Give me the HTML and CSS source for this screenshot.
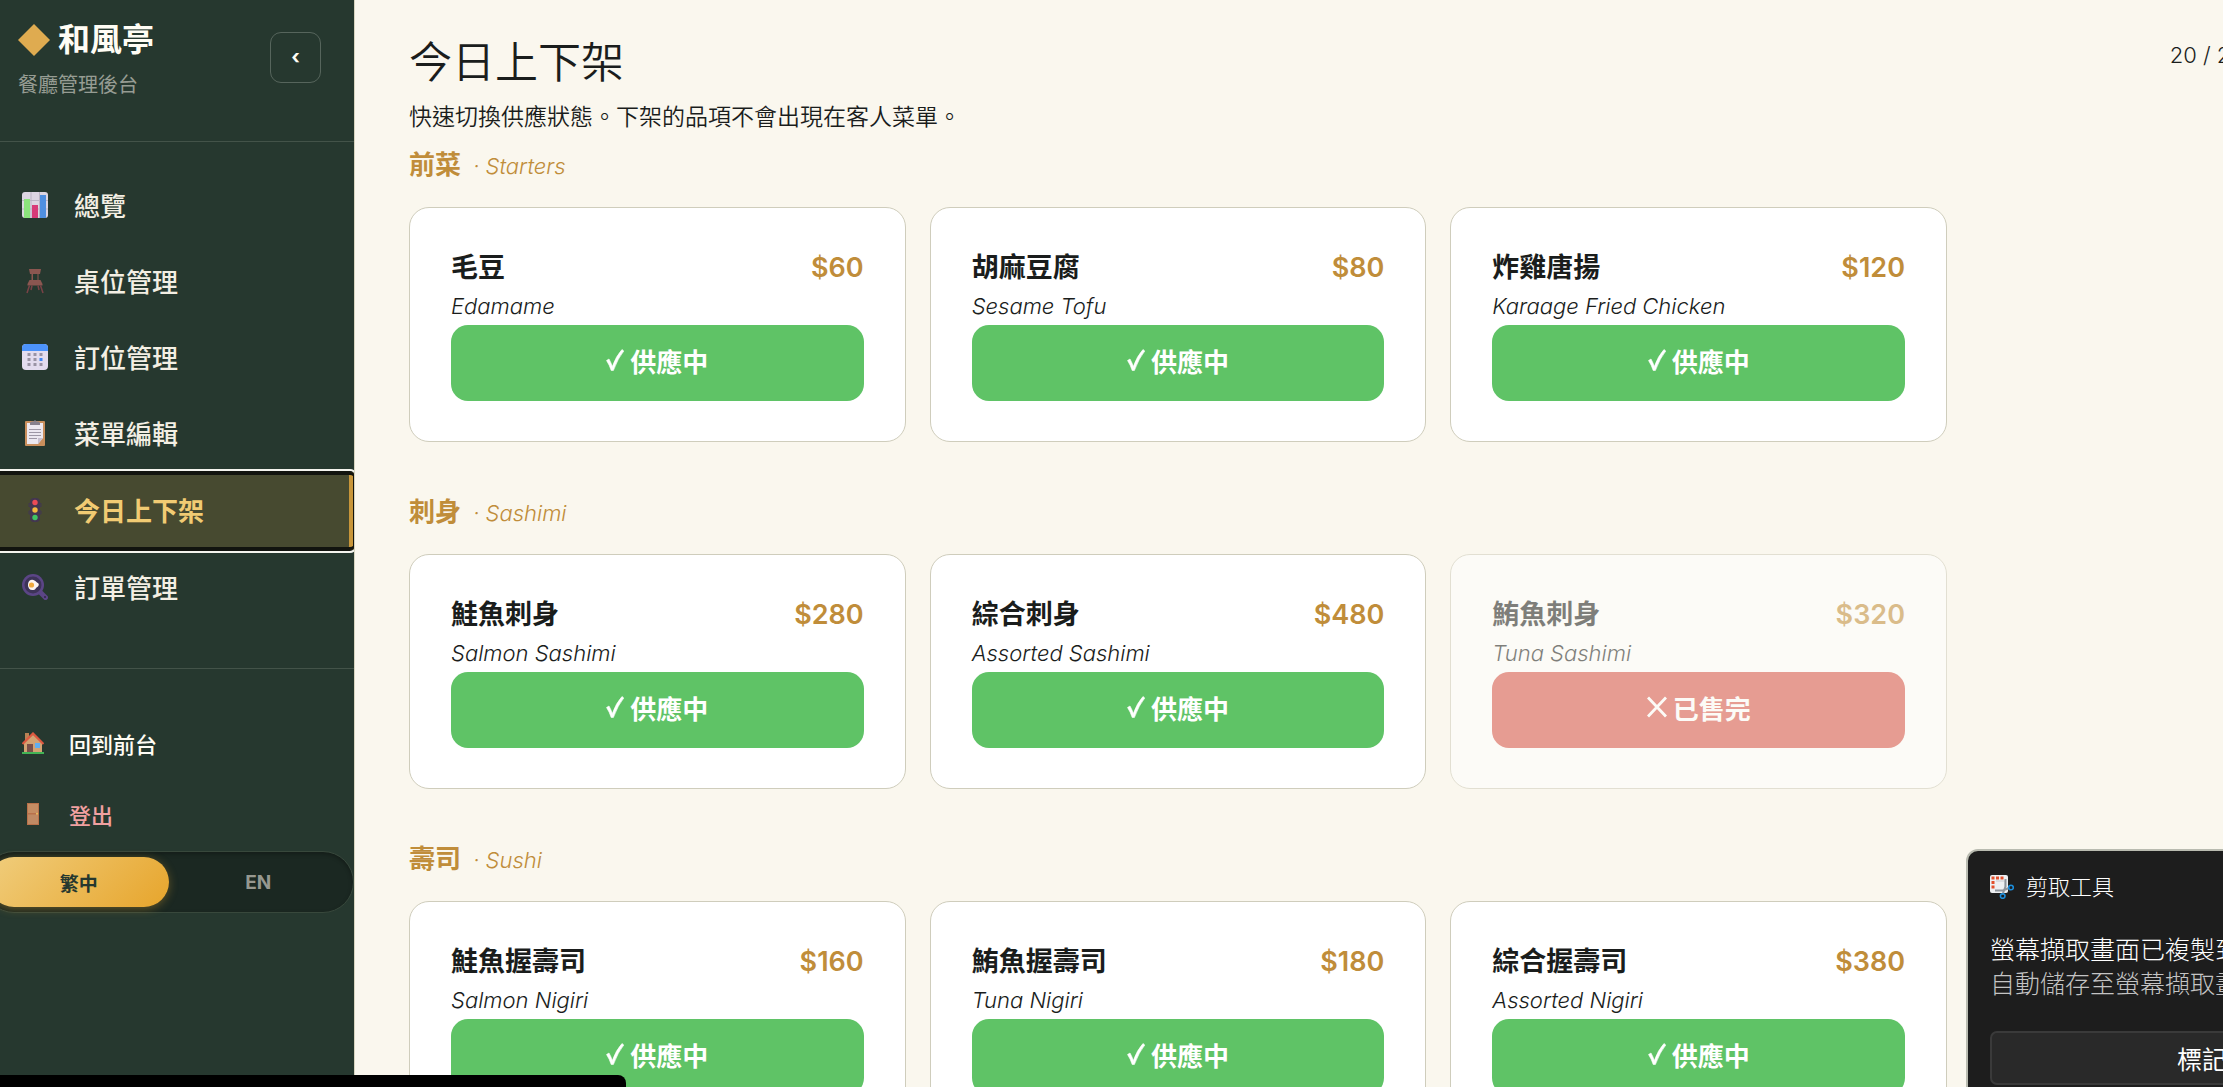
FILE: index.html
```html
<!DOCTYPE html>
<html lang="zh-Hant">
<head>
  <meta charset="UTF-8">
  <meta name="viewport" content="width=device-width, initial-scale=1">
  <title>今日上下架</title>
  <link rel="stylesheet" href="styles.css">
</head>
<body>
  <svg class="sprite" aria-hidden="true">
    <symbol id="check" viewBox="0 0 18 24">
      <path d="M0.5 12.5 L3 11 Q5 14.5 6.3 18.5 Q10 8 16 1.5 L17.8 3 Q12 10 7.4 22.5 H5.2 Q3.5 17 0.5 12.5z" fill="currentColor" stroke="currentColor" stroke-width="0.600"/>
    </symbol>
    <symbol id="cross" viewBox="0 0 20 24">
      <path d="M1 2.500 L19 21.500 M19 2.500 L1 21.500" stroke="currentColor" stroke-width="2.800" fill="none"/>
    </symbol>
  </svg>

  <div class="layout">
    <aside class="sidebar">
      <div class="brand">
        <div>
          <div class="brand-name">
            <svg width="32" height="32" viewBox="0 0 32 32"><path d="M16 0 L32 16 L16 32 L0 16z" fill="#dfab50"/></svg>
            和風亭
          </div>
          <div class="brand-sub">餐廳管理後台</div>
        </div>
        <button class="collapse" aria-label="收合">‹</button>
      </div>

      <nav class="nav">
        <a href="#" class="nav-item">
          <svg class="icon" viewBox="0 0 26 26">
            <rect width="26" height="26" rx="3" fill="#dcd5e2"/>
            <path d="M9 0v26M17.500 0v26M0 8.500h26M0 17h26" stroke="#bcb4c4" stroke-width="1"/>
            <rect x="2" y="7" width="6" height="19" fill="#8be27c"/>
            <rect x="10" y="13" width="6" height="13" fill="#d83a78"/>
            <rect x="18" y="3" width="6" height="23" fill="#4f8fe0"/>
          </svg>
          總覽
        </a>
        <a href="#" class="nav-item">
          <svg class="icon" viewBox="0 0 26 26">
            <path d="M7 1h12l-1 5h-1.500v6h2l2 4v1.500h-15V16l2-4h2V6H8z M11 6v6h4.500V6z" fill="#8b5650" fill-rule="evenodd"/>
            <path d="M7.500 17.500L5 25M18.500 17.500L21 25M10 17.500L9 22M16 17.500L17 22" stroke="#7a4246" stroke-width="1.500"/>
          </svg>
          桌位管理
        </a>
        <a href="#" class="nav-item">
          <svg class="icon" viewBox="0 0 26 26">
            <rect width="26" height="26" rx="4" fill="#e3dcef"/>
            <path d="M0 7V4a4 4 0 0 1 4-4h18a4 4 0 0 1 4 4v3z" fill="#4c93fb"/>
            <g fill="#9a93a5">
              <rect x="5.500" y="9" width="3" height="3"/><rect x="11.500" y="9" width="3" height="3"/><rect x="17.500" y="9" width="3" height="3"/>
              <rect x="5.500" y="14" width="3" height="3"/><rect x="11.500" y="14" width="3" height="3"/>
              <rect x="5.500" y="19" width="3" height="3"/><rect x="11.500" y="19" width="3" height="3"/><rect x="17.500" y="19" width="3" height="3"/>
            </g>
            <rect x="17.500" y="14" width="3" height="3" fill="#3f86f5"/>
          </svg>
          訂位管理
        </a>
        <a href="#" class="nav-item">
          <svg class="icon" viewBox="0 0 26 26">
            <rect x="3" y="1" width="20" height="25" rx="1" fill="#c98f5c"/>
            <path d="M5 3h16v15l-5 6H5z" fill="#ece8f0"/>
            <path d="M21 18h-5v6z" fill="#c7bfce"/>
            <path d="M8 5V3q0-1 1.500-1.500h2q1.500-2.500 3 0h2Q18 2 18 3v2z" fill="#86808c"/>
            <path d="M7 9.500h12M7 12.500h12M7 15.500h12M7 18.500h8" stroke="#9d97a5" stroke-width="1"/>
          </svg>
          菜單編輯
        </a>
        <a href="#" class="nav-item active">
          <svg class="icon" viewBox="0 0 26 26">
            <rect x="8" y="1" width="10" height="24" rx="4" fill="#433650"/>
            <path d="M8 6.500H7v3h1M18 6.500h1v3h-1M8 14H7v3h1M18 14h1v3h-1" stroke="#433650" fill="none"/>
            <circle cx="13" cy="5.500" r="2.700" fill="#ec4a56"/>
            <circle cx="13" cy="13" r="2.700" fill="#f2b840"/>
            <circle cx="13" cy="20.500" r="2.700" fill="#3fc464"/>
          </svg>
          今日上下架
        </a>
        <a href="#" class="nav-item">
          <svg class="icon" viewBox="0 0 26 26">
            <path d="M17 17l6.500 6.500" stroke="#5b4586" stroke-width="5" stroke-linecap="round"/>
            <circle cx="11" cy="11" r="11" fill="#5b4586"/>
            <circle cx="11" cy="11" r="8.500" fill="#3d3358"/>
            <path d="M6 10q1-5 5.500-4 2 .5 3.500 2.500 3 1 1 4-2 1-3 3-4 1.500-6-1-1.500-2-1-4.500z" fill="#fbf4f2"/>
            <circle cx="9.500" cy="11" r="2.600" fill="#f0a93f"/>
            <circle cx="23" cy="23" r="1" fill="#2e2744"/>
          </svg>
          訂單管理
        </a>
      </nav>

      <div class="side-links">
        <a href="#" class="side-link">
          <svg class="icon-sm" viewBox="0 0 22 22">
            <rect x="3" y="1" width="4" height="8" fill="#b98154"/>
            <path d="M2 11l9-8.500 9 8.500v10H2z" fill="#d2a273"/>
            <path d="M0.500 12L11 1.500 21.500 12" stroke="#dd5840" stroke-width="2.200" fill="none"/>
            <rect x="5" y="12" width="6" height="8.500" fill="#7b4f4a"/>
            <rect x="13" y="11" width="5" height="5" fill="#61aef0"/>
            <rect y="20" width="22" height="2" fill="#42b455"/>
          </svg>
          回到前台
        </a>
        <a href="#" class="side-link logout">
          <svg class="icon-sm" viewBox="0 0 22 22">
            <rect x="5" width="12" height="22" fill="#b9714a"/>
            <rect x="6" y="1" width="10" height="9" fill="#c58d63"/>
            <rect x="6" y="11.500" width="10" height="9.500" fill="#c08a64"/>
            <circle cx="15" cy="10.800" r="1" fill="#f0c060"/>
          </svg>
          登出
        </a>
      </div>

      <div class="lang">
        <button class="lang-btn on">繁中</button>
        <button class="lang-btn">EN</button>
      </div>
    </aside>

    <main class="main">
      <header class="page-head">
        <div>
          <h1>今日上下架</h1>
          <p>快速切換供應狀態。下架的品項不會出現在客人菜單。</p>
        </div>
        <div class="count">20 / 21</div>
      </header>

      <section>
        <h2>前菜 <em>· Starters</em></h2>
        <div class="grid">
          <article class="card">
            <div class="row"><h3>毛豆</h3><span class="price">$60</span></div>
            <p class="en">Edamame</p>
            <button class="toggle"><svg width="18" height="24"><use href="#check"/></svg>供應中</button>
          </article>
          <article class="card">
            <div class="row"><h3>胡麻豆腐</h3><span class="price">$80</span></div>
            <p class="en">Sesame Tofu</p>
            <button class="toggle"><svg width="18" height="24"><use href="#check"/></svg>供應中</button>
          </article>
          <article class="card">
            <div class="row"><h3>炸雞唐揚</h3><span class="price">$120</span></div>
            <p class="en">Karaage Fried Chicken</p>
            <button class="toggle"><svg width="18" height="24"><use href="#check"/></svg>供應中</button>
          </article>
        </div>
      </section>

      <section>
        <h2>刺身 <em>· Sashimi</em></h2>
        <div class="grid">
          <article class="card">
            <div class="row"><h3>鮭魚刺身</h3><span class="price">$280</span></div>
            <p class="en">Salmon Sashimi</p>
            <button class="toggle"><svg width="18" height="24"><use href="#check"/></svg>供應中</button>
          </article>
          <article class="card">
            <div class="row"><h3>綜合刺身</h3><span class="price">$480</span></div>
            <p class="en">Assorted Sashimi</p>
            <button class="toggle"><svg width="18" height="24"><use href="#check"/></svg>供應中</button>
          </article>
          <article class="card sold-out">
            <div class="row"><h3>鮪魚刺身</h3><span class="price">$320</span></div>
            <p class="en">Tuna Sashimi</p>
            <button class="toggle"><svg width="20" height="24"><use href="#cross"/></svg>已售完</button>
          </article>
        </div>
      </section>

      <section>
        <h2>壽司 <em>· Sushi</em></h2>
        <div class="grid">
          <article class="card">
            <div class="row"><h3>鮭魚握壽司</h3><span class="price">$160</span></div>
            <p class="en">Salmon Nigiri</p>
            <button class="toggle"><svg width="18" height="24"><use href="#check"/></svg>供應中</button>
          </article>
          <article class="card">
            <div class="row"><h3>鮪魚握壽司</h3><span class="price">$180</span></div>
            <p class="en">Tuna Nigiri</p>
            <button class="toggle"><svg width="18" height="24"><use href="#check"/></svg>供應中</button>
          </article>
          <article class="card">
            <div class="row"><h3>綜合握壽司</h3><span class="price">$380</span></div>
            <p class="en">Assorted Nigiri</p>
            <button class="toggle"><svg width="18" height="24"><use href="#check"/></svg>供應中</button>
          </article>
        </div>
      </section>
    </main>
  </div>

  <div class="status-bar"></div>

  <div class="toast">
    <div class="toast-head">
      <svg width="24" height="24" viewBox="0 0 24 24">
        <rect width="18" height="18" rx="2" fill="#eef0f2"/>
        <path d="M6 6h9v9" fill="none" stroke="#c9ccd1" stroke-width="1"/>
        <g fill="#e2502c">
          <rect x="1.500" y="1.500" width="3" height="3"/><rect x="6" y="1.500" width="3" height="3"/><rect x="10.500" y="1.500" width="3" height="3"/>
          <rect x="1.500" y="6" width="3" height="3"/><rect x="1.500" y="10.500" width="3" height="3"/>
        </g>
        <path d="M15.500 4v7.500l-3 8M5 15.500h8l6-2.500" stroke="#8f959c" stroke-width="2" fill="none"/>
        <circle cx="21" cy="12.500" r="2.300" fill="none" stroke="#1b8ddb" stroke-width="1.600"/>
        <circle cx="12.700" cy="21" r="2.300" fill="none" stroke="#1b8ddb" stroke-width="1.600"/>
      </svg>
      剪取工具
    </div>
    <p class="toast-title">螢幕擷取畫面已複製到</p>
    <p class="toast-text">自動儲存至螢幕擷取畫</p>
    <button class="toast-btn">標記</button>
  </div>
</body>
</html>
```
FILE: styles.css
```css
* {
  box-sizing: border-box;
  margin: 0;
  padding: 0;
}
body {
  font-family: Inter, "Noto Sans CJK TC", sans-serif;
  background: #faf7ee;
  color: #1a1d1c;
  height: 100vh;
  overflow: hidden;
}
a {
  text-decoration: none;
  color: inherit;
}
button {
  font-family: inherit;
  border: none;
  cursor: pointer;
}
.sprite {
  display: none;
}
.layout {
  display: flex;
  height: 100vh;
}

/* sidebar */
.sidebar {
  width: 355px;
  flex-shrink: 0;
  background: #26382f;
  border-right: 1px solid #d8d5c0;
  color: #f3efe4;
  overflow: hidden;
}
.brand {
  display: flex;
  justify-content: space-between;
  align-items: flex-start;
  height: 142px;
  padding: 16px 33px 0 18px;
  border-bottom: 1px solid #435349;
}
.brand-name {
  display: flex;
  align-items: center;
  gap: 8px;
  font-size: 32px;
  line-height: 48px;
  font-weight: 700;
  color: #fffdf5;
}
.brand-sub {
  font-size: 20px;
  line-height: 42px;
  color: #969c93;
}
.collapse {
  width: 51px;
  height: 51px;
  margin-top: 16px;
  padding-bottom: 2px;
  border: 1px solid #56655c;
  border-radius: 11px;
  background: transparent;
  color: #fffdf5;
  font-size: 20px;
  font-weight: 700;
}
.nav {
  padding: 26px 0 42px;
  border-bottom: 1px solid #435349;
}
.nav-item {
  display: flex;
  align-items: center;
  gap: 26px;
  height: 76px;
  padding: 0 0 3px 22px;
  font-size: 26px;
  font-weight: 500;
}
.nav-item.active {
  position: relative;
  height: 78px;
  margin-left: -6px;
  padding-left: 28px;
  background: #474a30;
  color: #f1cb73;
  font-weight: 700;
  border-radius: 4px;
  outline: 2px solid #f4f4ee;
  outline-offset: 1px;
  box-shadow: 0 0 0 1px #12140f, inset 0 3px 0 #12140f, inset 0 -3px 0 #12140f, inset -1px 0 0 #12140f, inset -5px 0 0 #c8963a;
}
.icon {
  width: 26px;
  height: 26px;
}
.side-links {
  padding-top: 40px;
}
.side-link {
  display: flex;
  align-items: center;
  gap: 25px;
  height: 71px;
  padding: 0 0 3px 22px;
  font-size: 22px;
  font-weight: 500;
  color: #fffdf5;
}
.side-link.logout {
  color: #f0a0a0;
}
.icon-sm {
  width: 22px;
  height: 22px;
}
.lang {
  display: flex;
  width: 371px;
  margin-left: -17px;
  padding: 5px;
  border: 1px solid #38483c;
  border-radius: 31px;
  background: #1b2822;
  box-shadow: inset 0 2px 4px rgba(0, 0, 0, 0.3);
}
.lang-btn {
  flex: 1;
  height: 50px;
  border-radius: 25px;
  background: transparent;
  color: #969890;
  font-size: 19px;
  font-weight: 700;
}
.lang-btn.on {
  background: linear-gradient(135deg, #f0cd7c, #e7a52c);
  color: #26382f;
  box-shadow: 0 2px 10px rgba(230, 165, 45, 0.35);
}

/* content */
.main {
  flex: 1;
  min-width: 0;
  padding: 32px 0 0 54px;
}
.page-head {
  display: flex;
  justify-content: space-between;
  align-items: flex-start;
  margin-bottom: 9px;
}
.page-head h1 {
  font-size: 43px;
  line-height: 60px;
  font-weight: 350;
}
.page-head p {
  margin-top: 6px;
  font-size: 23px;
  line-height: 38px;
  font-weight: 350;
}
.count {
  margin-right: -16px;
  font-size: 22px;
  line-height: 46px;
  font-weight: 300;
  white-space: nowrap;
}
section {
  max-width: 1538px;
  margin-bottom: 50px;
}
h2 {
  margin-bottom: 21px;
  font-size: 26px;
  line-height: 40px;
  font-weight: 700;
  color: #c08d3a;
}
h2 em {
  margin-left: 6px;
  font-size: 22px;
  font-weight: 300;
}
.grid {
  display: grid;
  grid-template-columns: repeat(3, 1fr);
  gap: 24px;
}
.card {
  padding: 40px 41px;
  background: #fff;
  border: 1px solid #cfcdbc;
  border-radius: 20px;
}
.card.sold-out {
  opacity: 0.55;
}
.row {
  display: flex;
  justify-content: space-between;
  align-items: center;
}
h3,
.price {
  font-size: 27px;
  line-height: 40px;
  font-weight: 700;
}
.price {
  font-weight: 600;
  color: #c08d3a;
}
.en {
  font-size: 22px;
  line-height: 37px;
  font-style: italic;
  font-weight: 300;
}
.toggle {
  display: flex;
  justify-content: center;
  align-items: center;
  gap: 6px;
  width: 100%;
  height: 76px;
  padding-bottom: 6px;
  border-radius: 17px;
  background: #5fc366;
  color: #fff;
  font-size: 26px;
  font-weight: 700;
}
.sold-out .toggle {
  background: #d65347;
}

/* overlays */
.status-bar {
  position: fixed;
  left: 0;
  bottom: 0;
  width: 626px;
  height: 12px;
  background: #000;
  border-top-right-radius: 8px;
}
.toast {
  position: fixed;
  left: calc(100% - 257px);
  top: calc(100% - 238px);
  width: 472px;
  padding: 18px 22px;
  background: #1d1d1d;
  border: 2px solid #b9bbb0;
  border-radius: 12px;
  color: #fff;
  font-weight: 300;
}
.toast-head {
  display: flex;
  align-items: center;
  gap: 12px;
  margin-bottom: 28px;
  font-size: 22px;
  line-height: 36px;
}
.toast-title,
.toast-text {
  font-size: 25px;
  line-height: 34px;
}
.toast-text {
  color: #c4c4c4;
}
.toast-btn {
  width: 100%;
  height: 54px;
  margin-top: 30px;
  background: #292929;
  border: 2px solid #3a3a3a;
  border-radius: 7px;
  color: #fff;
  font-size: 25px;
}
```
